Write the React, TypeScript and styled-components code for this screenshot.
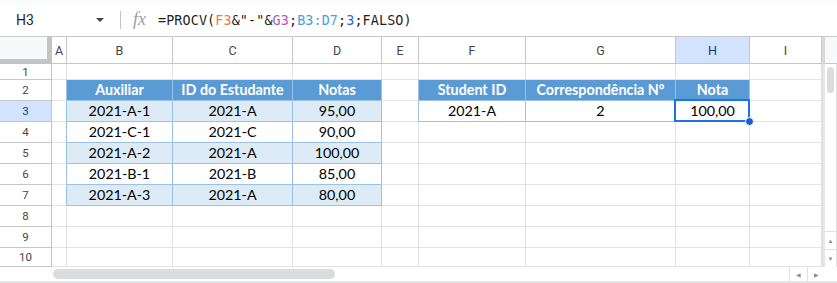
import * as React from "react";
import styled, { createGlobalStyle } from "styled-components";

const GlobalStyle = createGlobalStyle`
  html, body {
    margin: 0;
    padding: 0;
    background: #ffffff;
  }
  * {
    box-sizing: border-box;
  }
`;

const COLUMNS = ["A", "B", "C", "D", "E", "F", "G", "H", "I"];
const COLUMN_WIDTHS = [15, 106, 120, 89, 37, 107, 150, 74, 72];

type Kind = "plain" | "head" | "band" | "white";

// row -> column letter -> value
const DATA: Record<number, Record<string, string>> = {
  2: { B: "Auxiliar", C: "ID do Estudante", D: "Notas", F: "Student ID", G: "Correspondência Nº", H: "Nota" },
  3: { B: "2021-A-1", C: "2021-A", D: "95,00", F: "2021-A", G: "2", H: "100,00" },
  4: { B: "2021-C-1", C: "2021-C", D: "90,00" },
  5: { B: "2021-A-2", C: "2021-A", D: "100,00" },
  6: { B: "2021-B-1", C: "2021-B", D: "85,00" },
  7: { B: "2021-A-3", C: "2021-A", D: "80,00" },
};

const kindOf = (row: number, col: string): Kind => {
  const left = ["B", "C", "D"].includes(col);
  const right = ["F", "G", "H"].includes(col);
  if (row === 2 && (left || right)) return "head";
  if (left && row >= 3 && row <= 7) return row % 2 === 1 ? "band" : "white";
  if (right && row === 3) return "white";
  return "plain";
};

// the blue table edge lives on the cell to the left of each table
const edgeLine = (row: number, col: string): boolean =>
  (col === "A" && row >= 2 && row <= 7) || (col === "E" && row >= 2 && row <= 3);

export default function App(): JSX.Element {
  const rows = Array.from({ length: 10 }, (_, i) => i + 1);

  return (
    <>
      <GlobalStyle />
      <Page>
        <TopStrip />
        <FormulaBar>
          <NameBox>H3</NameBox>
          <Caret />
          <Divider />
          <FxLabel>fx</FxLabel>
          <Formula>
            =PROCV(<Ref $color="#f07b3f">F3</Ref>&amp;"-"&amp;<Ref $color="#b55ab8">G3</Ref>;
            <Ref $color="#4aa3d6">B3:D7</Ref>;<Ref $color="#3367d6">3</Ref>;FALSO)
          </Formula>
        </FormulaBar>

        <Sheet>
          <Corner />
          {COLUMNS.map((c) => (
            <ColHeader key={c} $active={c === "H"}>
              {c}
            </ColHeader>
          ))}
          <VScroll>
            <VScrollHead />
            <VTrack>
              <VThumb />
              <VTrackFill />
              <ArrowBox>▲</ArrowBox>
              <ArrowBox>▼</ArrowBox>
            </VTrack>
          </VScroll>

          {rows.map((r) => (
            <React.Fragment key={r}>
              <RowHeader $active={r === 3}>{r}</RowHeader>
              {COLUMNS.map((c) => {
                const kind = kindOf(r, c);
                const value = DATA[r]?.[c] ?? "";
                return (
                  <Cell key={c} $kind={kind} $edge={edgeLine(r, c)}>
                    {value}
                    {r === 3 && c === "H" && (
                      <Selection>
                        <FillHandle />
                      </Selection>
                    )}
                  </Cell>
                );
              })}
            </React.Fragment>
          ))}

          <HScroll>
            <HThumb />
            <HArrows>
              <HArrow>◀</HArrow>
              <HArrow>▶</HArrow>
            </HArrows>
          </HScroll>
        </Sheet>
      </Page>
    </>
  );
}

const Page = styled.div`
  width: 837px;
  height: 283px;
  overflow: hidden;
  font-family: Roboto, "Liberation Sans", Arial, sans-serif;
  background: #ffffff;
`;

const TopStrip = styled.div`
  height: 4px;
  background: #f9fbfd;
`;

const FormulaBar = styled.div`
  height: 33px;
  display: flex;
  align-items: center;
  border-bottom: 1px solid #c7c7c7;
  background: #ffffff;
`;

const NameBox = styled.div`
  width: 96px;
  padding-left: 16px;
  font-size: 14px;
  color: #1f1f1f;
`;

const Caret = styled.div`
  width: 0;
  height: 0;
  border-left: 4px solid transparent;
  border-right: 4px solid transparent;
  border-top: 4px solid #444746;
  margin-right: 16px;
`;

const Divider = styled.div`
  width: 1px;
  height: 18px;
  background: #c4c7c5;
  margin-right: 12px;
`;

const FxLabel = styled.div`
  font-family: "Liberation Serif", "DejaVu Serif", serif;
  font-style: italic;
  font-size: 18px;
  color: #a0a0a0;
  width: 25px;
  margin-top: -2px;
`;

const Formula = styled.div`
  font-family: "DejaVu Sans Mono", "Liberation Mono", monospace;
  font-size: 13.4px;
  color: #1f1f1f;
  white-space: pre;
  letter-spacing: 0.12px;
`;

const Ref = styled.span<{ $color: string }>`
  color: ${(p) => p.$color};
`;

const Sheet = styled.div`
  display: grid;
  grid-template-columns: 52px ${COLUMN_WIDTHS.map((w) => `${w}px`).join(" ")} 15px;
  grid-template-rows: 27px 16px repeat(8, 21px) 19px 16px;
  font-family: Lato, "Liberation Sans", sans-serif;
`;

const Corner = styled.div`
  background: #f8f9fa;
  border-right: 5px solid #c4c4c4;
  border-bottom: 5px solid #c4c4c4;
`;

const ColHeader = styled.div<{ $active?: boolean }>`
  display: flex;
  align-items: center;
  justify-content: center;
  font-family: Roboto, "Liberation Sans", sans-serif;
  font-size: 12.5px;
  color: ${(p) => (p.$active ? "#0b3b8c" : "#444746")};
  background: ${(p) => (p.$active ? "#d3e3fd" : "#ffffff")};
  border-right: 1px solid #c4c7c5;
  border-bottom: 1px solid #c4c7c5;
`;

const RowHeader = styled.div<{ $active?: boolean }>`
  display: flex;
  align-items: center;
  justify-content: center;
  font-family: Roboto, "Liberation Sans", sans-serif;
  font-size: 11.5px;
  color: ${(p) => (p.$active ? "#0b3b8c" : "#444746")};
  background: ${(p) => (p.$active ? "#d3e3fd" : "#ffffff")};
  border-right: 1px solid #c4c7c5;
  border-bottom: 1px solid #c4c7c5;
`;

const KIND_BG: Record<Kind, string> = {
  plain: "#ffffff",
  head: "#5b9bd5",
  band: "#ddebf7",
  white: "#ffffff",
};

const Cell = styled.div<{ $kind: Kind; $edge?: boolean }>`
  position: relative;
  display: flex;
  align-items: flex-end;
  justify-content: center;
  padding-bottom: 1px;
  overflow: visible;
  white-space: nowrap;
  font-size: 14.3px;
  line-height: 18px;
  font-weight: ${(p) => (p.$kind === "head" ? 700 : 400)};
  color: ${(p) => (p.$kind === "head" ? "#ffffff" : "#000000")};
  background: ${(p) => KIND_BG[p.$kind]};
  border-right: 1px solid
    ${(p) => (p.$kind !== "plain" || p.$edge ? "#9bc2e6" : "#e2e2e2")};
  border-bottom: 1px solid ${(p) => (p.$kind !== "plain" ? "#9bc2e6" : "#e2e2e2")};
`;

const Selection = styled.div`
  position: absolute;
  top: -2px;
  left: -2px;
  right: -1px;
  bottom: -1px;
  border: 2px solid #1a73e8;
  z-index: 2;
`;

const FillHandle = styled.div`
  position: absolute;
  right: -6px;
  bottom: -6px;
  width: 9px;
  height: 9px;
  border-radius: 50%;
  background: #1a5fd0;
  border: 1px solid #ffffff;
`;

const VScroll = styled.div`
  grid-column: 11;
  grid-row: 1 / span 11;
  display: flex;
  flex-direction: column;
  border-left: 1px solid #e0e0e0;
`;

const VScrollHead = styled.div`
  height: 27px;
  background: #f8f9fa;
  border-bottom: 1px solid #c4c7c5;
  border-left: 2px solid #d7d7d7;
`;

const VTrack = styled.div`
  flex: 1;
  display: flex;
  flex-direction: column;
  align-items: stretch;
  border-left: 2px solid #e6e6e6;
  border-right: 1px solid #e0e0e0;
`;

const VThumb = styled.div`
  margin: 3px 2px 0 2px;
  height: 26px;
  border-radius: 5px;
  background: #dadce0;
`;

const VTrackFill = styled.div`
  flex: 1;
`;

const ArrowBox = styled.div`
  height: 18px;
  display: flex;
  align-items: center;
  justify-content: center;
  font-size: 6px;
  color: #8f8f8f;
  border-top: 1px solid #e0e0e0;
`;

const HScroll = styled.div`
  grid-column: 1 / -1;
  grid-row: 12;
  display: flex;
  align-items: flex-start;
  padding-left: 53px;
  border-bottom: 2px solid #e5e5e5;
`;

const HThumb = styled.div`
  margin-top: 2px;
  width: 282px;
  height: 10px;
  border-radius: 5px;
  background: #dadce0;
`;

const HArrows = styled.div`
  margin-left: auto;
  margin-right: 12px;
  display: flex;
  height: 14px;
`;

const HArrow = styled.div`
  width: 18px;
  display: flex;
  align-items: center;
  justify-content: center;
  font-size: 6px;
  color: #8f8f8f;
  border-left: 1px solid #e0e0e0;
`;
